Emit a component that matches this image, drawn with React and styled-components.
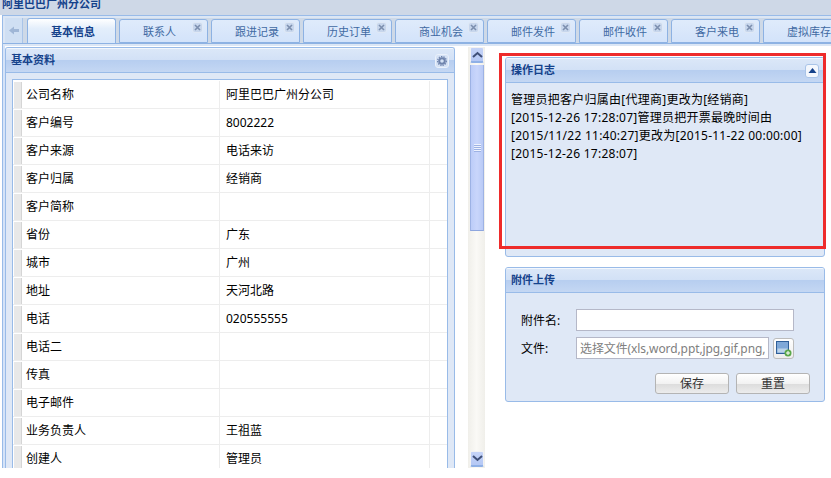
import styled, { createGlobalStyle } from "styled-components";

const FONT = `"Noto Sans", "Noto Sans CJK SC", sans-serif`;

const GlobalStyle = createGlobalStyle`
  html, body { margin: 0; padding: 0; background: #fff; }
  body { font-family: ${FONT}; font-size: 12px; color: #000; }
`;

const Page = styled.div`
  width: 831px;
  height: 478px;
  overflow: hidden;
  background: #fff;
`;

const TitleBar = styled.div`
  height: 15px;
  overflow: hidden;
  background: #ced8e7;
  padding-left: 2px;
  font-size: 11px;
  font-weight: bold;
  line-height: 8px;
  color: #15428b;
`;

const Shell = styled.div`
  height: 452px;
  margin-left: 2px;
  border-left: 1px solid #99bbe8;
  border-top: 1px solid #99bbe8;
  background: #fff;
  overflow: hidden;
  display: flex;
  flex-direction: column;
`;

const TabStrip = styled.div`
  height: 28px;
  flex: none;
  box-sizing: border-box;
  display: flex;
  align-items: flex-end;
  gap: 3px;
  background: #ced9e7;
  border-bottom: 1px solid #8db2e3;
  box-shadow: inset 0 2px 0 #dbe6f5, inset 2px 0 0 #dbe6f5;
  padding-left: 2px;
  overflow: hidden;
`;

const ScrollLeft = styled.div`
  width: 17px;
  height: 25px;
  flex: none;
  margin-right: 1px;
  display: flex;
  align-items: center;
  justify-content: center;
  background: #cfdff3;
  border-right: 1px solid #a9c4e8;
`;

const Tab = styled.div`
  position: relative;
  width: 89px;
  height: ${(p) => (p.$active ? 25 : 24)}px;
  flex: none;
  box-sizing: border-box;
  border: 1px solid #8db2e3;
  border-bottom: ${(p) => (p.$active ? "none" : "1px solid #8db2e3")};
  border-radius: 3px 3px 0 0;
  background: ${(p) => (p.$active ? "linear-gradient(#fff, #e3eefb 40%, #d9e8fb)" : "linear-gradient(#dfebfb, #d3e3fa)")};
  display: flex;
  align-items: center;
  padding: 0 0 1px 23px;
  font-size: 11px;
  font-weight: ${(p) => (p.$active ? "bold" : "normal")};
  color: ${(p) => (p.$active ? "#15428b" : "#416aa3")};
  white-space: nowrap;
`;

const TabClose = styled.span`
  position: absolute;
  top: 3px;
  right: 5px;
  width: 9px;
  height: 9px;
  border-radius: 2px;
  background: #c7d6ec;
  box-shadow: 0 0 0 1px #dfe8f5;
  display: flex;
  align-items: center;
  justify-content: center;
`;

const Body = styled.div`
  position: relative;
  flex: 1;
  min-height: 0;
  display: flex;
  padding: 3px 0 0 2px;
  box-shadow: inset 0 2px 0 #dbe6f5, inset 2px 0 0 #d5e3f8;
`;

const LeftPanel = styled.div`
  width: 450px;
  flex: none;
  box-sizing: border-box;
  border: 1px solid #99bbe8;
  border-bottom: none;
  border-radius: 3px 3px 0 0;
  background: #dfe8f6;
  display: flex;
  flex-direction: column;
  overflow: hidden;
`;

const PanelHeader = styled.div`
  height: 25px;
  flex: none;
  box-sizing: border-box;
  display: flex;
  align-items: center;
  justify-content: space-between;
  padding: 0 5px;
  background: linear-gradient(#dbe7f8 0, #d2e1f6 48%, #b7cef0 50%, #c4d7f3 100%);
  border-bottom: 1px solid #99bbe8;
  border-top: 1px solid #f3f7fd;
  font-size: 11px;
  font-weight: bold;
  color: #15428b;
`;

const HeaderTitle = styled.span`
  margin-top: -3px;
`;

const ToolButton = styled.span`
  width: 14px;
  height: 14px;
  box-sizing: border-box;
  border-radius: 3px;
  background: ${(p) => p.$bg};
  border: 1px solid ${(p) => p.$line};
  display: flex;
  align-items: center;
  justify-content: center;
`;

const FormBody = styled.div`
  flex: 1;
  margin: 6px 6px 0 6px;
  padding: 1px 0 0;
  border: 1px solid #99bbe8;
  border-bottom: none;
  background: #fff;
  overflow: hidden;
`;

const Row = styled.div`
  display: grid;
  grid-template-columns: 8px 198px 210px;
  height: 28px;
  box-sizing: border-box;
  padding-left: 1px;
  border-bottom: 1px solid #ededed;
`;

const RowMark = styled.div`
  background: #e8e8e8;
  margin-top: 1px;
  margin-bottom: 1px;
  border-right: 1px solid #d5d5d5;
`;

const RowLabel = styled.div`
  padding-left: 4px;
  line-height: 28px;
  border-right: 1px solid #ededed;
`;

const RowValue = styled.div`
  padding-left: 6px;
  line-height: 28px;
  border-right: 1px solid #ededed;
`;

const ScrollTrack = styled.div`
  width: 17px;
  flex: none;
  box-sizing: border-box;
  padding: 0 1px 1px 2px;
  margin-left: 13px;
  margin-right: 20px;
  display: flex;
  flex-direction: column;
  background: linear-gradient(90deg, #f0efea, #faf9f6 50%, #f0efea);
`;

const ScrollArrow = styled.div`
  height: 16px;
  flex: none;
  box-sizing: border-box;
  border: 1px solid #f2f2f2;
  border-bottom: 2px solid #8fb0e6;
  border-radius: 2px;
  background: linear-gradient(#c5d3f7, #b5c8f5);
  display: flex;
  align-items: center;
  justify-content: center;
`;

const ScrollThumb = styled.div`
  height: 166px;
  flex: none;
  margin-top: 2px;
  box-sizing: border-box;
  padding-top: 79px;
  border-left: 1px solid #9db2e4;
  border-right: 1px solid #9db2e4;
  border-bottom: 1px solid #8ea6de;
  background: linear-gradient(90deg, #bcccf8, #c9d6fb 50%, #b9caf6);
  display: flex;
  align-items: flex-start;
  justify-content: center;
`;

const ThumbGrip = styled.div`
  width: 7px;
  height: 8px;
  background: repeating-linear-gradient(#eef2fd 0, #eef2fd 1px, #9db2e4 1px, #9db2e4 2px);
`;

const ScrollSpace = styled.div`
  flex: 1;
`;

const RightColumn = styled.div`
  width: 320px;
  flex: none;
  padding-top: 10px;
  display: flex;
  flex-direction: column;
  gap: 10px;
`;

const SidePanel = styled.div`
  height: ${(p) => p.$height}px;
  box-sizing: border-box;
  border: 1px solid #99bbe8;
  border-radius: 3px;
  background: #dfe8f6;
  display: flex;
  flex-direction: column;
  overflow: hidden;
`;

const LogBody = styled.div`
  padding: 8px 0 0 5px;
  font-size: 12px;
  line-height: 18px;
  color: #000;
`;

const LogLine = styled.div`
  letter-spacing: 0.25px;
  white-space: nowrap;
`;

const UploadBody = styled.div`
  padding: 16px 0 0 15px;
  display: flex;
  flex-direction: column;
`;

const FieldRow = styled.div`
  display: flex;
  align-items: center;
  height: 22px;
  margin-bottom: 6px;
`;

const FieldLabel = styled.label`
  width: 55px;
  flex: none;
  font-size: 12px;
`;

const TextInput = styled.input`
  width: 218px;
  height: 22px;
  box-sizing: border-box;
  border: 1px solid #b5b8c8;
  padding: 0 3px;
  background: #fff;
  font: 12px ${FONT};
  &::placeholder { color: #808080; opacity: 1; letter-spacing: -0.1px; }
`;

const FileInput = styled(TextInput)`
  width: 193px;
  margin-right: 4px;
`;

const IconButton = styled.span`
  width: 21px;
  height: 21px;
  box-sizing: border-box;
  border: 1px solid #bcbcbc;
  border-radius: 3px;
  background: linear-gradient(#fff, #ededed);
  display: flex;
  align-items: center;
  justify-content: center;
`;

const ButtonRow = styled.div`
  display: flex;
  justify-content: flex-end;
  gap: 7px;
  padding-right: 14px;
  margin-top: 8px;
`;

const Button = styled.button`
  width: 74px;
  height: 21px;
  padding: 0 0 2px;
  border: 1px solid #b4b4b4;
  border-radius: 3px;
  background: linear-gradient(#fff 0, #f2f2f2 50%, #dcdcdc 52%, #ececec 100%);
  font: 12px ${FONT};
  color: #333;
`;

const Annotation = styled.div`
  position: absolute;
  left: 496px;
  top: 9px;
  width: 327px;
  height: 196px;
  box-sizing: border-box;
  border: 3px solid #ee2b2b;
  pointer-events: none;
`;

const tabs = ["基本信息", "联系人", "跟进记录", "历史订单", "商业机会", "邮件发件", "邮件收件", "客户来电", "虚拟库存"];

const rows = [
  ["公司名称", "阿里巴巴广州分公司"],
  ["客户编号", "8002222"],
  ["客户来源", "电话来访"],
  ["客户归属", "经销商"],
  ["客户简称", ""],
  ["省份", "广东"],
  ["城市", "广州"],
  ["地址", "天河北路"],
  ["电话", "020555555"],
  ["电话二", ""],
  ["传真", ""],
  ["电子邮件", ""],
  ["业务负责人", "王祖蓝"],
  ["创建人", "管理员"],
];

const logLines = [
  "管理员把客户归属由[代理商]更改为[经销商]",
  "[2015-12-26 17:28:07]管理员把开票最晚时间由",
  "[2015/11/22 11:40:27]更改为[2015-11-22 00:00:00]",
  "[2015-12-26 17:28:07]",
];

function Chevron({ up }) {
  return (
    <svg width="11" height="7" viewBox="0 0 11 7">
      <path d={up ? "M1 6 L5.5 2 L10 6" : "M1 1 L5.5 5 L10 1"} fill="none" stroke="#3f4f78" strokeWidth="2" />
    </svg>
  );
}

function CloseIcon() {
  return (
    <svg width="7" height="7" viewBox="0 0 7 7">
      <path d="M1 1 L6 6 M6 1 L1 6" stroke="#7c8fae" strokeWidth="1.6" />
    </svg>
  );
}

function App() {
  return (
    <Page>
      <GlobalStyle />
      <TitleBar>阿里巴巴广州分公司</TitleBar>
      <Shell>
        <TabStrip>
          <ScrollLeft>
            <svg width="10" height="9" viewBox="0 0 10 9">
              <path d="M0 4.5 L5 0.5 V3 H10 V6 H5 V8.5 Z" fill="#9fb6d6" />
            </svg>
          </ScrollLeft>
          {tabs.map((label, i) => (
            <Tab key={label} $active={i === 0}>
              {label}
              {i > 0 && (
                <TabClose>
                  <CloseIcon />
                </TabClose>
              )}
            </Tab>
          ))}
        </TabStrip>
        <Body>
          <LeftPanel>
            <PanelHeader>
              <HeaderTitle>基本资料</HeaderTitle>
              <ToolButton $bg="#d5e2f5" $line="#eaf1fb">
                <svg width="10" height="10" viewBox="0 0 10 10">
                  <circle cx="5" cy="5" r="2.8" fill="none" stroke="#6f84ad" strokeWidth="2" />
                  <circle cx="5" cy="5" r="4.4" fill="none" stroke="#6f84ad" strokeWidth="1.2" strokeDasharray="1.4 1" />
                </svg>
              </ToolButton>
            </PanelHeader>
            <FormBody>
              {rows.map(([label, value]) => (
                <Row key={label}>
                  <RowMark />
                  <RowLabel>{label}</RowLabel>
                  <RowValue>{value}</RowValue>
                </Row>
              ))}
            </FormBody>
          </LeftPanel>
          <ScrollTrack>
            <ScrollArrow>
              <Chevron up />
            </ScrollArrow>
            <ScrollThumb>
              <ThumbGrip />
            </ScrollThumb>
            <ScrollSpace />
            <ScrollArrow>
              <Chevron />
            </ScrollArrow>
          </ScrollTrack>
          <RightColumn>
            <SidePanel $height={200}>
              <PanelHeader>
                <HeaderTitle>操作日志</HeaderTitle>
                <ToolButton $bg="#f3f7fd" $line="#a9c4e8">
                  <svg width="9" height="5" viewBox="0 0 9 5">
                    <path d="M0.5 5 L4.5 0 L8.5 5 Z" fill="#15428b" />
                  </svg>
                </ToolButton>
              </PanelHeader>
              <LogBody>
                {logLines.map((line) => (
                  <LogLine key={line}>{line}</LogLine>
                ))}
              </LogBody>
            </SidePanel>
            <SidePanel $height={135}>
              <PanelHeader>
                <HeaderTitle>附件上传</HeaderTitle>
              </PanelHeader>
              <UploadBody>
                <FieldRow>
                  <FieldLabel>附件名:</FieldLabel>
                  <TextInput type="text" />
                </FieldRow>
                <FieldRow>
                  <FieldLabel>文件:</FieldLabel>
                  <FileInput type="text" placeholder="选择文件(xls,word,ppt,jpg,gif,png,doc)" />
                  <IconButton>
                    <svg width="17" height="17" viewBox="0 0 17 17">
                      <rect x="1.5" y="1.5" width="12" height="12" fill="#7fa8d8" stroke="#2f5f99" />
                      <rect x="2.5" y="8.5" width="10" height="4" fill="#bcd3ea" />
                      <circle cx="13" cy="13" r="3.5" fill="#5aa84a" />
                      <path d="M11 13 H15 M13 11 V15" stroke="#fff" strokeWidth="1" />
                    </svg>
                  </IconButton>
                </FieldRow>
                <ButtonRow>
                  <Button type="button">保存</Button>
                  <Button type="button">重置</Button>
                </ButtonRow>
              </UploadBody>
            </SidePanel>
          </RightColumn>
          <Annotation />
        </Body>
      </Shell>
    </Page>
  );
}

export default App;
